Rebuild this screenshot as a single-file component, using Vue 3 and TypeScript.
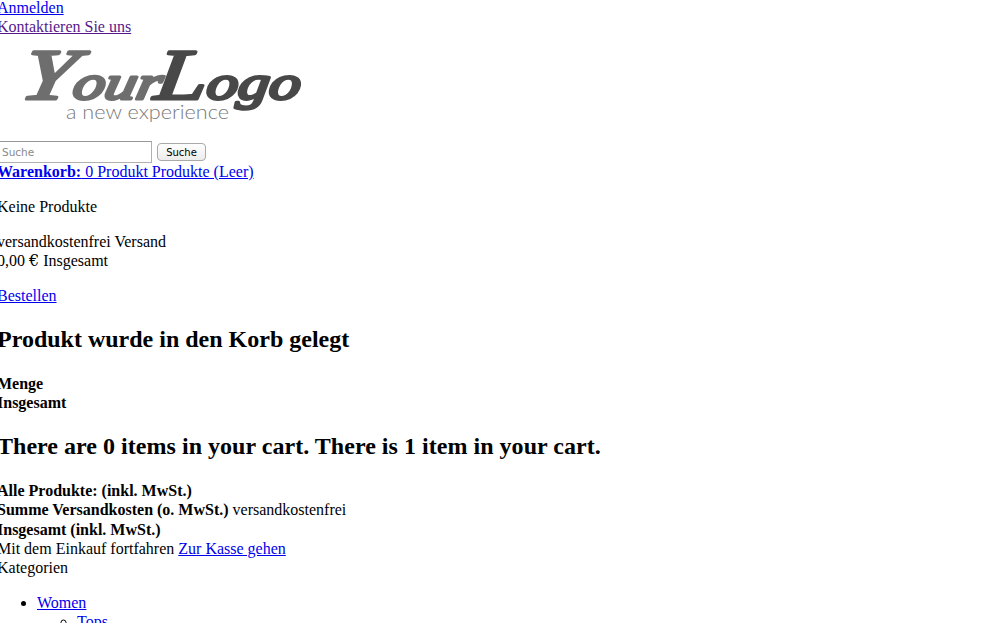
<script setup lang="ts">
const subCategories = ["Tops"];
</script>

<template>
  <div class="page">
    <div><a href="#login" class="link">Anmelden</a></div>
    <div><a href="#contact" class="link link--visited">Kontaktieren Sie uns</a></div>

    <a href="#home" class="logo" aria-label="Your Logo">
      <svg width="350" height="105" viewBox="0 0 350 105">
        <text class="logo-script logo-script--light" transform="translate(21 63) skewX(-12)" textLength="141" lengthAdjust="spacingAndGlyphs"><tspan class="logo-cap">Y</tspan>our</text>
        <text class="logo-script logo-script--dark" transform="translate(156 63) skewX(-8)" textLength="146" lengthAdjust="spacingAndGlyphs"><tspan class="logo-cap">L</tspan>ogo</text>
        <text class="logo-tagline" x="69" y="83" textLength="163" lengthAdjust="spacingAndGlyphs">a new experience</text>
      </svg>
    </a>

    <form class="search" @submit.prevent>
      <input class="search-input" type="text" placeholder="Suche" />
      <button class="search-button" type="submit">Suche</button>
    </form>

    <div>
      <a href="#cart" class="link"><b>Warenkorb:</b> 0 Produkt Produkte (Leer)</a>
    </div>
    <p>Keine Produkte</p>
    <p>
      versandkostenfrei Versand<br />
      0,00 <span class="euro">€</span> Insgesamt
    </p>
    <p><a href="#order" class="link">Bestellen</a></p>

    <h2>Produkt wurde in den Korb gelegt</h2>
    <div><b>Menge</b></div>
    <div><b>Insgesamt</b></div>

    <h2 class="cart-count">There are 0 items in your cart. There is 1 item in your cart.</h2>
    <div><b>Alle Produkte: (inkl. MwSt.)</b></div>
    <div class="row-tall"><b>Summe Versandkosten (o. MwSt.)</b> versandkostenfrei</div>
    <div><b>Insgesamt (inkl. MwSt.)</b></div>
    <div>Mit dem Einkauf fortfahren <a href="#checkout" class="link">Zur Kasse gehen</a></div>
    <div>Kategorien</div>

    <ul>
      <li>
        <a href="#women" class="link">Women</a>
        <ul>
          <li v-for="item in subCategories" :key="item">
            <a href="#tops" class="link">{{ item }}</a>
          </li>
        </ul>
      </li>
    </ul>
  </div>
</template>

<style scoped>
/* the whole page sits slightly off the top left corner, like the reference */
.page {
  margin: -2px 0 0 -3px;
  font-family: "Liberation Serif", "Times New Roman", serif;
  font-size: 16px;
  line-height: 19px;
  color: #000;
}

.link {
  color: #0000ee;
  text-decoration: underline;
}
.link--visited {
  color: #551a8b;
}

p {
  margin: 16px 0;
}

h2 {
  font-size: 24px;
  line-height: 29px;
  font-weight: bold;
  margin: 20px 0;
}
.cart-count {
  letter-spacing: 0.03px;
}

.euro {
  font-family: "DejaVu Serif", serif;
}

.row-tall {
  line-height: 20px;
}

ul {
  margin: 16px 0;
  padding-left: 40px;
}
ul ul {
  margin: 0;
  list-style: circle;
}

.logo {
  display: block;
  height: 105px;
}
.logo svg {
  display: block;
}
.logo-script {
  font-family: "Liberation Serif", serif;
  font-style: italic;
  font-size: 48px;
  stroke-width: 3px;
  stroke-linejoin: round;
  stroke-linecap: round;
}
.logo-script--light {
  fill: #6e6e6e;
  stroke: #6e6e6e;
}
.logo-script--dark {
  fill: #484848;
  stroke: #484848;
}
.logo-cap {
  font-size: 72px;
}
.logo-tagline {
  font-family: "Lato", sans-serif;
  font-weight: 300;
  font-size: 20px;
  fill: #7a7a7a;
}

.search {
  display: flex;
  align-items: flex-start;
  gap: 5px;
  height: 21px;
}
.search-input {
  box-sizing: border-box;
  width: 155px;
  height: 22px;
  margin: 0;
  padding: 1px 1px 1px 4px;
  border: 1px solid #b0b0b0;
  border-top-color: #989898;
  background: #fff;
  font-family: "DejaVu Sans", sans-serif;
  font-size: 10.5px;
}
.search-input::placeholder {
  color: #8a8a8a;
}
.search-button {
  box-sizing: border-box;
  width: 49px;
  height: 18px;
  margin: 2px 0 0;
  padding: 0;
  border: 1px solid #a9a9a9;
  border-radius: 4px;
  background: linear-gradient(#ffffff, #ececec);
  color: #000;
  font-family: "DejaVu Sans", sans-serif;
  font-size: 10px;
}
</style>

<style>
html {
  overflow: hidden;
}
body {
  background: #fff;
}
</style>
